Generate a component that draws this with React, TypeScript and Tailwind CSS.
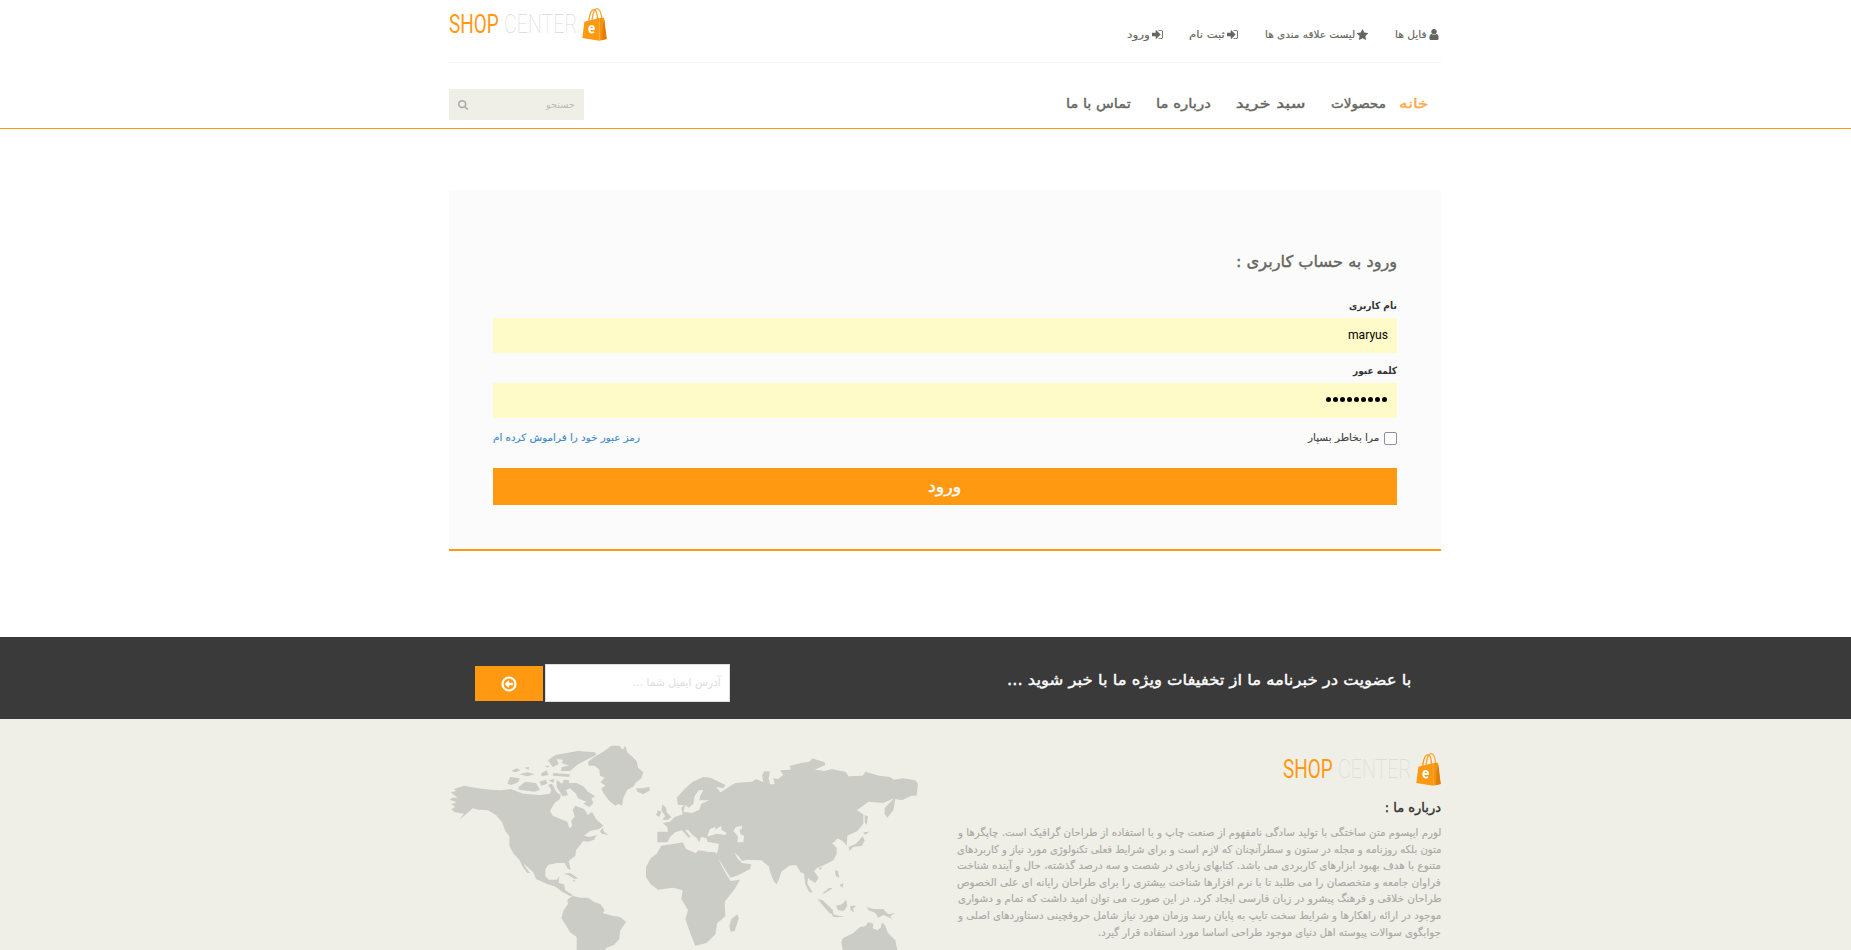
import { useLayoutEffect, useRef, useState } from "react";

/** Single line of text condensed or stretched to a given width. */
function Fit({ w, ltr = false, className = "", children }: { w: number; ltr?: boolean; className?: string; children: string }) {
  const ref = useRef<HTMLSpanElement>(null);
  const [scale, setScale] = useState(1);
  useLayoutEffect(() => {
    if (ref.current) setScale(w / ref.current.offsetWidth);
  }, [w, children]);
  return (
    <span className={`flex shrink-0 ${className}`} style={{ width: w }} dir={ltr ? "ltr" : "rtl"}>
      <span
        ref={ref}
        className={`block shrink-0 whitespace-nowrap ${ltr ? "origin-left" : "origin-right"}`}
        style={{ transform: `scaleX(${scale})` }}
      >
        {children}
      </span>
    </span>
  );
}

const icons = {
  user: {
    box: "0 0 1280 1792",
    size: "w-[10px] h-[13px]",
    d: "M1280 1399q0 109-62.5 187t-150.5 78H213q-88 0-150.5-78T0 1399q0-85 8.5-160.5t31.5-152 58.5-131 94-89T327 832q131 128 313 128t313-128q76 0 134.5 34.5t94 89 58.5 131 31.5 152 8.5 160.5zm-256-887q0 159-112.5 271.5T640 896 368.5 783.5 256 512t112.5-271.5T640 128t271.5 112.5T1024 512z",
  },
  star: {
    box: "0 0 1664 1792",
    size: "w-[11px] h-[12px]",
    d: "M1664 647q0 22-26 48l-363 354 86 500q1 7 1 20 0 21-10.500 35.500t-30.500 14.500q-19 0-40-12l-449-236-449 236q-22 12-40 12-21 0-31.500-14.500t-10.500-35.500q0-6 2-20l86-500-364-354q-25-27-25-48 0-37 56-46l502-73 225-455q19-41 49-41t49 41l225 455 502 73q56 9 56 46z",
  },
  signIn: {
    box: "0 0 1536 1792",
    size: "w-[11px] h-[13px]",
    d: "M1184 896q0 26-19 45l-544 544q-19 19-45 19t-45-19-19-45v-288H64q-26 0-45-19T0 1088V704q0-26 19-45t45-19h448V352q0-26 19-45t45-19 45 19l544 544q19 19 19 45zm352-352v704q0 119-84.500 203.500T1248 1536H928q-13 0-22.500-9.500T896 1504q0-4-1-20t-.5-26.500 3-23.500 10-19.500 20.500-6.500h320q66 0 113-47t47-113V544q0-66-47-113t-113-47H936l-11.500-1-11.500-3-8-5.500-7-9-2-13.500q0-4-1-20t-.5-26.500 3-23.500 10-19.500 20.500-6.500h320q119 0 203.500 84.500T1536 544z",
  },
  search: {
    box: "0 0 1664 1792",
    size: "w-[10px] h-[11px]",
    d: "M1152 832q0-185-131.500-316.500T704 384 387.500 515.500 256 832t131.500 316.500T704 1280t316.500-131.500T1152 832zm512 832q0 52-38 90t-90 38q-54 0-90-38l-343-342q-179 124-399 124-143 0-273.500-55.500t-225-150-150-225T0 832t55.500-273.500 150-225 225-150T704 128t273.500 55.500 225 150 150 225T1408 832q0 220-124 399l343 343q37 37 37 90z",
  },
};

function Icon({ name, className = "" }: { name: keyof typeof icons; className?: string }) {
  const { box, size, d } = icons[name];
  return (
    <svg viewBox={box} fill="currentColor" className={`shrink-0 ${size} ${className}`}>
      <path d={d} />
    </svg>
  );
}

function Bag() {
  return (
    <svg viewBox="0 0 75 102" className="h-[34px] w-[25px] shrink-0">
      <path d="M20 46 C22 18 30 8 37 8 C44 9 46 22 47 42" fill="none" stroke="#ff9c14" strokeWidth="4" />
      <path d="M30 40 C33 14 39 4 46 5 C54 6 58 22 60 38" fill="none" stroke="#f7a83c" strokeWidth="4" />
      <path d="M7 44 L52 33 L52 101 L1 93 Z" fill="#ff9912" />
      <path d="M52 33 L66 32 L74 96 L52 101 Z" fill="#f5930f" />
      <path d="M62 56 L67 38 L74 96 L60 99 Z" fill="#dd7f0a" />
      <path d="M23 66 H36 C36 55 22 53 22 65 C21 78 30 78 36 75" fill="none" stroke="#fff" strokeWidth="5.500" />
    </svg>
  );
}

function Logo() {
  return (
    <div dir="ltr" className="flex w-[158px] items-start justify-between font-['Roboto',sans-serif]">
      <div className="flex gap-[5px] pt-[5px] text-[25px] leading-[25px]">
        <Fit w={50} ltr className="text-[#ff9912]">SHOP</Fit>
        <Fit w={73} ltr className="font-thin text-[#d9d9d9]">CENTER</Fit>
      </div>
      <Bag />
    </div>
  );
}

const links = [
  { text: "فایل ها", w: 32, icon: "user", gap: "ml-[27px]" },
  { text: "لیست علاقه مندی ها", w: 90, icon: "star", gap: "ml-[27px]" },
  { text: "ثبت نام", w: 36, icon: "signIn", gap: "ml-[26px]" },
  { text: "ورود", w: 23, icon: "signIn", gap: "" },
] as const;

const about = [
  { text: "لورم ایپسوم متن ساختگی با تولید سادگی نامفهوم از صنعت چاپ و با استفاده از طراحان گرافیک است. چاپگرها و", w: 483 },
  { text: "متون بلکه روزنامه و مجله در ستون و سطرآنچنان که لازم است و برای شرایط فعلی تکنولوژی مورد نیاز و کاربردهای", w: 484 },
  { text: "متنوع با هدف بهبود ابزارهای کاربردی می باشد. کتابهای زیادی در شصت و سه درصد گذشته، حال و آینده شناخت", w: 484 },
  { text: "فراوان جامعه و متخصصان را می طلبد تا با نرم افزارها شناخت بیشتری را برای طراحان رایانه ای علی الخصوص", w: 484 },
  { text: "طراحان خلاقی و فرهنگ پیشرو در زبان فارسی ایجاد کرد. در این صورت می توان امید داشت که تمام و دشواری", w: 484 },
  { text: "موجود در ارائه راهکارها و شرایط سخت تایپ به پایان رسد وزمان مورد نیاز شامل حروفچینی دستاوردهای اصلی و", w: 483 },
  { text: "جوابگوی سوالات پیوسته اهل دنیای موجود طراحی اساسا مورد استفاده قرار گیرد.", w: 343 },
];

function WorldMap() {
  return (
    <svg viewBox="27 0 1410 645" className="h-[215px] w-[470px] shrink-0" fill="#cbccc6">
      {/* North America */}
      <path d="M32 172 L48 168 L42 162 L72 152 L104 158 L150 164 L186 166 L212 162 L250 176 L300 180 L330 176 L334 164 L324 150 L336 146 L350 172 L362 180 L360 192 L344 204 L330 228 L338 242 L382 260 L388 280 L396 274 L394 256 L404 246 L398 224 L406 212 L432 222 L444 240 L456 230 L468 252 L490 272 L478 282 L450 288 L432 302 L448 306 L470 300 L462 314 L444 320 L430 318 L408 346 L406 362 L386 378 L392 404 L384 402 L374 384 L350 384 L324 390 L316 404 L316 424 L326 434 L350 434 L358 424 L356 444 L372 448 L376 466 L398 480 L392 484 L366 470 L348 456 L320 446 L288 432 L280 412 L262 396 L238 374 L222 358 L208 334 L208 304 L196 288 L186 262 L168 240 L144 226 L116 224 L98 220 L80 236 L58 254 L72 236 L44 232 L34 222 L46 216 L34 208 L50 202 L30 194 L36 188 L52 188 Z" />
      <path d="M238 374 L248 380 L256 396 L270 414 L262 414 L250 398 Z" />
      <path d="M196 284 L216 296 L214 302 Z M480 288 L488 278 L492 290 L506 300 L484 296 Z" />
      {/* Arctic islands */}
      <path d="M202 146 L210 126 L240 130 L234 142 L214 150 Z M236 156 L256 140 L288 144 L300 164 L284 170 L236 164 Z M214 108 L230 100 L242 106 L226 112 Z M238 118 L262 112 L284 118 L262 124 Z M252 98 L268 96 L266 104 Z M298 140 L318 134 L322 146 L304 152 Z M302 116 L320 106 L326 120 L306 124 Z M314 92 L328 92 L324 98 Z M326 136 L344 132 L340 144 Z M340 114 L390 118 L388 126 L338 122 Z" />
      <path d="M324 76 L346 60 L380 54 L414 48 L466 52 L468 60 L440 74 L414 88 L390 108 L362 108 L366 96 L388 92 L364 84 L370 74 L350 72 L356 88 L338 96 Z" />
      <path d="M350 134 L366 146 L372 134 L388 136 L386 144 L410 144 L430 154 L444 170 L466 184 L454 190 L460 204 L448 216 L430 206 L440 200 L414 190 L408 176 L390 160 L378 166 L384 180 L368 184 L350 156 Z" />
      {/* Greenland and Iceland */}
      <path d="M444 80 L462 66 L490 50 L514 32 L538 32 L548 44 L556 32 L562 52 L590 78 L594 98 L610 112 L604 130 L586 144 L582 154 L562 164 L550 188 L546 212 L536 206 L526 212 L508 198 L490 174 L484 160 L496 152 L482 142 L494 128 L480 122 L478 104 L464 92 L446 92 Z" />
      <path d="M588 160 L606 160 L628 156 L630 166 L610 178 L592 170 Z" />
      {/* Caribbean */}
      <path d="M370 416 L390 414 L414 430 L404 432 L384 420 Z M398 434 L408 438 L400 440 Z" />
      {/* South America */}
      <path d="M398 482 L420 488 L444 488 L462 500 L482 508 L494 526 L488 534 L516 542 L540 546 L558 560 L540 588 L538 612 L522 630 L500 638 L494 645 L410 645 L410 606 L390 592 L376 568 L364 550 L370 528 L384 506 L382 494 Z" />
      {/* British Isles */}
      <path d="M668 208 L678 218 L680 232 L694 246 L684 254 L666 254 L676 244 L664 226 Z M648 240 L654 226 L664 230 L658 246 Z" />
      {/* Europe, Asia */}
      <path d="M652 290 L684 290 L682 276 L668 264 L690 260 L704 246 L728 238 L724 220 L732 210 L714 210 L710 188 L736 160 L758 140 L790 126 L812 128 L856 150 L850 160 L828 156 L842 172 L854 164 L866 156 L886 144 L936 140 L948 132 L970 142 L966 120 L974 108 L990 110 L986 130 L990 148 L1004 148 L1000 130 L1014 132 L1030 120 L1020 106 L1052 104 L1050 92 L1084 84 L1108 80 L1118 70 L1130 74 L1154 82 L1156 90 L1124 104 L1154 108 L1176 102 L1192 106 L1216 110 L1226 124 L1268 122 L1276 110 L1318 122 L1350 126 L1362 134 L1390 130 L1426 136 L1434 146 L1430 182 L1414 182 L1386 196 L1366 192 L1360 226 L1342 248 L1334 238 L1334 220 L1362 190 L1330 204 L1286 200 L1250 226 L1270 238 L1270 266 L1252 288 L1222 302 L1220 332 L1208 318 L1192 310 L1184 320 L1176 324 L1190 338 L1190 358 L1180 376 L1148 392 L1132 398 L1122 408 L1136 428 L1126 444 L1112 436 L1104 428 L1102 446 L1118 472 L1108 472 L1096 448 L1092 416 L1082 412 L1068 390 L1048 392 L1024 410 L1018 430 L1010 448 L1002 440 L990 410 L986 394 L964 376 L922 374 L906 378 L896 364 L884 354 L892 370 L906 384 L934 388 L930 402 L896 420 L872 428 L862 414 L844 384 L826 360 L834 348 L836 328 L802 320 L800 310 L784 306 L776 324 L760 302 L744 284 L736 286 L752 306 L746 308 L726 286 L706 292 L690 306 L682 322 L652 322 Z" />
      {/* Africa */}
      <path d="M664 332 L704 326 L730 322 L738 342 L768 354 L776 344 L800 350 L826 352 L844 390 L860 420 L872 438 L900 434 L884 462 L854 500 L856 544 L832 564 L826 598 L800 624 L766 632 L752 598 L736 552 L744 526 L730 502 L724 492 L728 466 L700 458 L654 464 L632 448 L618 426 L618 396 L632 370 L650 356 Z" />
      <path d="M892 538 L896 550 L884 588 L872 590 L868 574 L874 552 Z" />
      {/* Inner seas */}
      <g fill="#efefe8">
        <path d="M776 166 L790 166 L780 184 L778 196 L808 196 L784 206 L778 224 L756 234 L730 230 L736 210 L746 218 L760 206 L764 184 Z" />
        <path d="M802 302 L810 282 L826 276 L826 284 L844 272 L844 284 L860 294 L856 300 L830 296 L806 304 Z" />
        <path d="M880 288 L888 276 L906 272 L906 282 L898 284 L902 298 L912 302 L910 322 L892 322 L894 304 Z" />
        <path d="M728 322 L734 312 L752 318 L758 302 L770 308 L778 324 L800 322 L836 326 L832 348 L806 348 L772 346 L766 354 L738 340 Z" />
      </g>
      {/* Islands of Asia and Oceania */}
      <path d="M1274 240 L1284 244 L1280 270 L1274 262 Z M1270 292 L1288 290 L1276 300 Z M1268 304 L1274 316 L1266 332 L1240 336 L1228 348 L1226 336 L1248 326 Z M1136 398 L1146 396 L1142 406 Z M1184 406 L1194 408 L1198 428 L1188 424 Z M1198 450 L1210 444 L1208 458 Z M1146 476 L1168 458 L1178 460 L1156 474 Z" />
      <path d="M1132 492 L1148 496 L1178 524 L1182 540 L1168 534 Z M1176 538 L1214 546 L1180 546 Z M1188 512 L1206 508 L1218 494 L1222 512 L1212 528 L1194 526 Z M1230 512 L1250 512 L1240 520 L1242 532 L1232 526 Z M1280 516 L1300 522 L1330 522 L1358 552 L1330 540 L1314 548 L1306 534 L1286 526 Z M1342 538 L1366 534 L1350 544 Z" />
      <path d="M1204 620 L1208 610 L1240 594 L1260 576 L1276 574 L1284 562 L1300 566 L1298 580 L1312 586 L1322 578 L1326 562 L1336 572 L1344 594 L1366 616 L1372 645 L1208 645 Z" />
    </svg>
  );
}

export default function App() {
  return (
    <div dir="rtl" className="flex h-[950px] w-full flex-col overflow-hidden bg-white font-['DejaVu_Sans','Liberation_Sans',sans-serif] text-[#666660]">
      <header className="h-[129px] shrink-0 border-b border-[#ff9912]">
        <div className="mr-[410px] flex w-[992px] flex-col">
          <div className="flex h-[63px] justify-between border-b border-[#f2f2f2] pt-[7px]">
            <nav className="flex h-[55px] items-center pr-[2px] text-[10px] [-webkit-text-stroke:0.15px]">
              {links.map(({ text, w, icon, gap }) => (
                <a key={text} className={`flex items-center gap-[2px] ${gap}`}>
                  <Icon name={icon} />
                  <Fit w={w}>{text}</Fit>
                </a>
              ))}
            </nav>
            <Logo />
          </div>
          <div className="flex h-[65px] items-center justify-between pt-[18px]">
            <nav className="mb-[2px] flex pr-[12px] text-[13px] [-webkit-text-stroke:0.4px]">
              <Fit w={30} className="ml-[13px] text-[#ffa94a]">خانه</Fit>
              <Fit w={55} className="ml-[26px]">محصولات</Fit>
              <Fit w={69} className="ml-[25px]">سبد خرید</Fit>
              <Fit w={55} className="ml-[25px]">درباره ما</Fit>
              <Fit w={65}>تماس با ما</Fit>
            </nav>
            <div className="flex h-[31px] w-[135px] items-center justify-between bg-[#efefe8] pr-[9px] pl-[9px] text-[10px] text-[#bbb]">
              <Fit w={29}>جستجو</Fit>
              <Icon name="search" className="text-[#aaa]" />
            </div>
          </div>
        </div>
      </header>

      <main className="mt-[61px] mr-[410px] flex h-[361px] w-[992px] shrink-0 flex-col border-b-2 border-[#ff9912] bg-[#fbfbfb] px-[44px] pt-[60px]">
        <h1 className="flex h-[24px] items-center text-[16px] [-webkit-text-stroke:0.4px]">
          <Fit w={161}>ورود به حساب کاربری :</Fit>
        </h1>
        <label className="mt-[21px] flex h-[20px] items-center text-[10px] font-bold text-[#333]">
          <Fit w={48}>نام کاربری</Fit>
        </label>
        <div className="mt-[3px] flex h-[35px] items-center bg-[#fffbc8] px-[9px] pb-[2px] font-['Roboto',sans-serif] text-[13px] text-black">
          <Fit w={40}>maryus</Fit>
        </div>
        <label className="mt-[7px] flex h-[20px] items-center text-[10px] font-bold text-[#333]">
          <Fit w={44}>کلمه عبور</Fit>
        </label>
        <div className="mt-[3px] flex h-[35px] items-center gap-[2px] bg-[#fffbc8] px-[10px] pb-[2px]">
          {Array.from({ length: 9 }, (_, i) => (
            <span key={i} className="size-[5px] rounded-full bg-black" />
          ))}
        </div>
        <div className="mt-[9px] flex h-[20px] items-center justify-between text-[10px] [-webkit-text-stroke:0.15px]">
          <label className="flex items-center gap-[5px] text-[#444]">
            <span className="mt-[2px] size-[13px] rounded-[2px] border border-[#8f8f9d] bg-white" />
            <Fit w={71}>مرا بخاطر بسپار</Fit>
          </label>
          <a className="text-[#428bca]">
            <Fit w={147}>رمز عبور خود را فراموش کرده ام</Fit>
          </a>
        </div>
        <button className="mt-[21px] flex h-[37px] items-center justify-center bg-[#ff9912] text-[16px] text-white [-webkit-text-stroke:0.4px]">
          <Fit w={33}>ورود</Fit>
        </button>
      </main>

      <section className="mt-[86px] h-[82px] shrink-0 bg-[#3a3a3a]">
        <div className="mr-[440px] flex h-full w-[936px] items-center justify-between">
          <Fit w={404} className="mt-[4px] text-[15px] text-white [-webkit-text-stroke:0.4px]">با عضویت در خبرنامه ما از تخفیفات ویژه ما با خبر شوید ...</Fit>
          <div className="mt-[10px] flex items-center gap-[2px]">
            <div className="flex h-[38px] w-[185px] items-center border border-[#ddd] bg-white px-[8px] text-[11px] text-[#ddd]">
              <Fit w={88}>آدرس ایمیل شما ...</Fit>
            </div>
            <button className="flex h-[35px] w-[68px] items-center justify-center bg-[#ff9912]">
              <svg viewBox="0 0 16 16" className="mt-px size-[16px]" fill="none">
                <circle cx="8" cy="8" r="6.500" stroke="#fff" strokeWidth="2.200" />
                <path d="M3.600 8 L8 3.900 V6.800 H12 V9.200 H8 V12.100 Z" fill="#fff" />
              </svg>
            </button>
          </div>
        </div>
      </section>

      <footer className="grow bg-[#efefe8]">
        <div className="mr-[410px] flex w-[992px] justify-between">
          <div className="flex flex-col pt-[33px]">
            <Logo />
            <h2 className="mt-[11px] flex h-[22px] items-center text-[13px] text-[#333] [-webkit-text-stroke:0.4px]">
              <Fit w={56}>درباره ما :</Fit>
            </h2>
            <div className="mt-[5px] flex flex-col text-[10.5px] leading-[16.6px] text-[#aaaaa6] [-webkit-text-stroke:0.15px]">
              {about.map(({ text, w }) => (
                <Fit key={text} w={w}>{text}</Fit>
              ))}
            </div>
          </div>
          <div className="pt-[16px]">
            <WorldMap />
          </div>
        </div>
      </footer>
    </div>
  );
}
